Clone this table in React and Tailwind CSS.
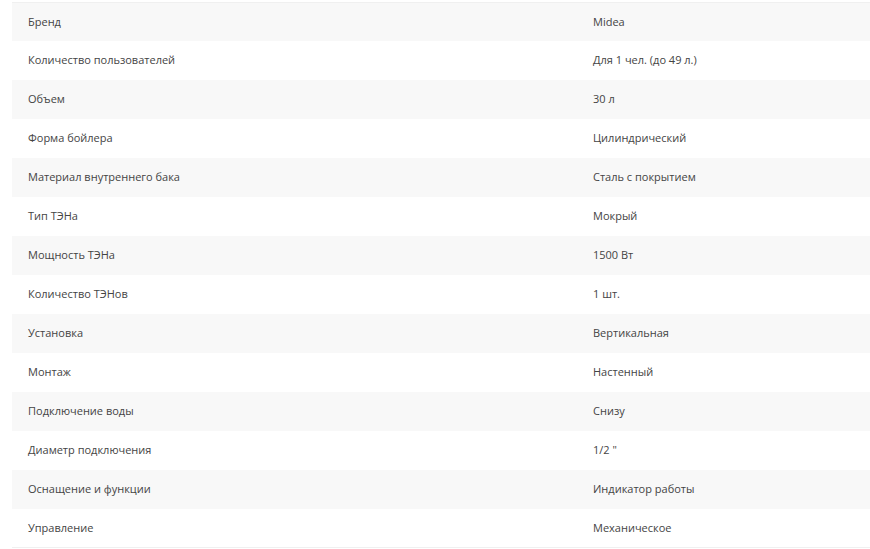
import React from 'react';

const specs = [
    ['Бренд', 'Midea'],
    ['Количество пользователей', 'Для 1 чел. (до 49 л.)'],
    ['Объем', '30 л'],
    ['Форма бойлера', 'Цилиндрический'],
    ['Материал внутреннего бака', 'Сталь с покрытием'],
    ['Тип ТЭНа', 'Мокрый'],
    ['Мощность ТЭНа', '1500 Вт'],
    ['Количество ТЭНов', '1 шт.'],
    ['Установка', 'Вертикальная'],
    ['Монтаж', 'Настенный'],
    ['Подключение воды', 'Снизу'],
    ['Диаметр подключения', '1/2 "'],
    ['Оснащение и функции', 'Индикатор работы'],
    ['Управление', 'Механическое'],
];

const App = () => {
    return (
        <div className="min-h-screen bg-white pt-[2px] pl-[12px] font-['Open_Sans',sans-serif] text-[11px] text-[#444444]">
            {/*SPECS TABLE*/}
            <div>
                {specs.map(([label, value], i) => (
                    <div
                        key={label}
                        className={`grid grid-cols-[565px_1fr] h-[39px] items-center border-[#f0f0f0] ${i === 0 ? 'border-t' : ''} ${i === specs.length - 1 ? 'border-b' : ''} ${i % 2 === 0 ? 'bg-[#f8f8f8]' : 'bg-white'}`}
                    >
                        <div className="pl-4">{label}</div>
                        <div className="pl-4">{value}</div>
                    </div>
                ))}
            </div>
        </div>
    );
};

export default App;
